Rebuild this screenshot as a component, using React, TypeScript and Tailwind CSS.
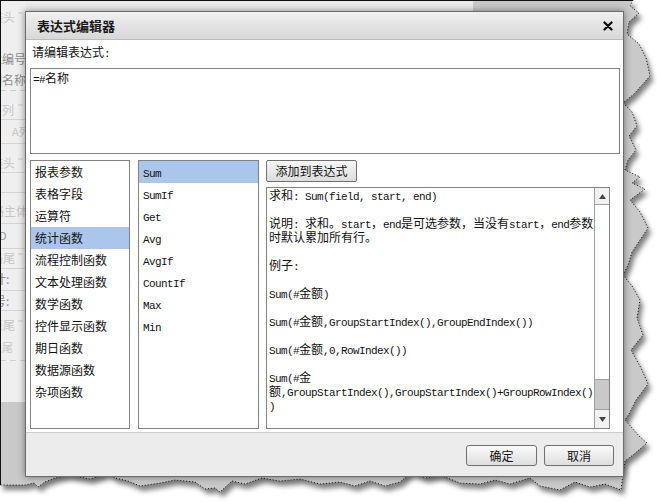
import React from "react";

function Mixed({ t }: { t: string }) {
  const parts = t.split(/([\x20-\x7e]+)/);
  return (
    <>
      {parts.map((s, i) =>
        s === "" ? null : /^[\x20-\x7e]+$/.test(s) ? (
          <span key={i} className="font-['Liberation_Mono',monospace] text-[11px] tracking-[-0.6px]">
            {s}
          </span>
        ) : (
          <span key={i} className="font-['Noto_Sans_CJK_SC',sans-serif] text-[12px]">
            {s}
          </span>
        )
      )}
    </>
  );
}

const tearPts =
  "633,0 630,6 639,13 629,22 627,34 639,44 646,58 650,76 634,94 623,103 632,112 637,126 629,136 636,150 628,160 625,170 640,177 632,183 645,189 630,200 640,212 648,228 640,240 632,252 628,265 623,275 632,286 640,300 637,318 643,335 631,350 641,368 648,384 636,400 629,414 625,420 640,437 647,443 633,455 625,461 623,475 621,490 605,484 590,487 575,482 560,490 540,486 530,478 510,484 495,480 480,484 460,483 440,475 425,478 412,472 400,482 385,486 370,481 355,486 340,482 320,484 300,479 280,481 262,478 245,484 232,481 220,492 215,488 205,489 195,482 175,480 160,483 140,486 128,481 115,478 108,473 100,476 90,479 80,477 68,475 55,478 45,482 38,487 34,483 25,485 0,485";

const leftItems = [
  "报表参数",
  "表格字段",
  "运算符",
  "统计函数",
  "流程控制函数",
  "文本处理函数",
  "数学函数",
  "控件显示函数",
  "期日函数",
  "数据源函数",
  "杂项函数",
];
const midItems = ["Sum", "SumIf", "Get", "Avg", "AvgIf", "CountIf", "Max", "Min"];

const lines = [
  "求和: Sum(field, start, end)",
  "",
  "说明: 求和。start，end是可选参数，当没有start，end参数",
  "时默认累加所有行。",
  "",
  "例子:",
  "",
  "Sum(#金额)",
  "",
  "Sum(#金额,GroupStartIndex(),GroupEndIndex())",
  "",
  "Sum(#金额,0,RowIndex())",
  "",
  "Sum(#金",
  "额,GroupStartIndex(),GroupStartIndex()+GroupRowIndex()",
  ")",
];

function Background() {
  return (
    <svg className="absolute inset-0" width={657} height={503} viewBox="0 0 657 503">
      <defs>
        <filter id="sh" x="-10%" y="-10%" width="120%" height="120%">
          <feGaussianBlur stdDeviation="2.5" />
        </filter>
        <clipPath id="strip">
          <rect x="0" y="0" width="25" height="402" />
        </clipPath>
      </defs>
      <polygon points={"0,0 " + tearPts} fill="#6a6a6a" transform="translate(3,5)" filter="url(#sh)" opacity="0.85" />
      <polygon points={"0,0 " + tearPts} fill="#c9c9c9" />
      <rect x="0" y="0" width="473" height="11" fill="#ececec" />
      <rect x="0" y="0" width="25" height="402" fill="#efefef" />
      <g clipPath="url(#strip)" fontFamily="'Noto Sans CJK SC', sans-serif" fontSize="12">
        <text x="-9" y="22" fill="#c6c6c6">装头</text>
        <line x1="18" y1="13" x2="23" y2="13" stroke="#c6c6c6" />
        <text x="-10" y="64" fill="#8e8e8e">栏编号</text>
        <text x="-10" y="85" fill="#8e8e8e">列名称</text>
        <line x1="0" y1="90.5" x2="25" y2="90.5" stroke="#cfcfcf" strokeDasharray="6 4" />
        <text x="-10" y="115" fill="#c6c6c6">序列</text>
        <line x1="18" y1="105" x2="23" y2="105" stroke="#c6c6c6" />
        <line x1="0" y1="119.5" x2="25" y2="119.5" stroke="#d4d4d4" />
        <text x="12" y="136" fill="#c6c6c6" fontSize="11">A列</text>
        <line x1="0" y1="143.5" x2="25" y2="143.5" stroke="#d4d4d4" />
        <text x="-9" y="168" fill="#c6c6c6">装头</text>
        <line x1="18" y1="159" x2="23" y2="159" stroke="#c6c6c6" />
        <line x1="0" y1="172.5" x2="25" y2="172.5" stroke="#d4d4d4" />
        <line x1="0" y1="192.5" x2="25" y2="192.5" stroke="#d4d4d4" />
        <text x="-8" y="216" fill="#c6c6c6">路主体</text>
        <line x1="0" y1="223.5" x2="25" y2="223.5" stroke="#d4d4d4" />
        <text x="-1" y="240" fill="#999999" fontSize="11">D</text>
        <line x1="0" y1="248.5" x2="25" y2="248.5" stroke="#d4d4d4" />
        <text x="-9" y="263" fill="#c6c6c6">路尾</text>
        <line x1="18" y1="254" x2="23" y2="254" stroke="#c6c6c6" />
        <line x1="0" y1="268.5" x2="25" y2="268.5" stroke="#d4d4d4" />
        <text x="-6" y="284" fill="#8e8e8e">计:</text>
        <line x1="0" y1="290.5" x2="25" y2="290.5" stroke="#d4d4d4" />
        <text x="-6" y="306" fill="#8e8e8e">号:</text>
        <line x1="0" y1="310.5" x2="25" y2="310.5" stroke="#d4d4d4" />
        <text x="-9" y="330" fill="#c6c6c6">表尾</text>
        <line x1="18" y1="321" x2="23" y2="321" stroke="#c6c6c6" />
        <text x="-9" y="352" fill="#c6c6c6" fontSize="11">表尾</text>
        <line x1="0" y1="360.5" x2="25" y2="360.5" stroke="#d0d0d0" strokeDasharray="6 4" />
      </g>
      <line x1="0" y1="0.5" x2="633" y2="0.5" stroke="#111" />
      <line x1="0.5" y1="0" x2="0.5" y2="485" stroke="#111" />
      <polyline points={tearPts} fill="none" stroke="#111" strokeWidth="1" strokeDasharray="1 2" />
    </svg>
  );
}

function ListItem({ text, selected, mono }: { text: string; selected?: boolean; mono?: boolean }) {
  return (
    <div
      className={
        selected
          ? "h-[22px] leading-[20px] pl-[4px] bg-[#abc6ec] text-[#111] whitespace-pre"
          : "h-[22px] leading-[20px] pl-[4px] text-[#111] whitespace-pre"
      }
    >
      {mono ? (
        <span className="font-['Liberation_Mono',monospace] text-[11px] tracking-[-0.6px]">{text}</span>
      ) : (
        <span className="font-['Noto_Sans_CJK_SC',sans-serif] text-[12px]">{text}</span>
      )}
    </div>
  );
}

export default function App() {
  return (
    <div className="relative w-[657px] h-[503px] overflow-hidden bg-white pt-[11px] pl-[25px]">
      <Background />
      <div className="relative w-[599px] h-[466px] border border-[#6c6c6c] bg-white flex flex-col shadow-[0_0_7px_rgba(0,0,0,0.45)] text-[#111]">
        <div className="h-[28px] border-b border-[#bcbcbc] bg-gradient-to-b from-[#f0f0f0] to-[#d8d8d8] flex items-center justify-between pl-[11px] pr-[10px]">
          <span className="font-['Noto_Sans_CJK_SC',sans-serif] text-[13px] font-bold text-[#1a1a1a]">表达式编辑器</span>
          <svg width="10" height="10" viewBox="0 0 10 10" className="mt-[1px]">
            <path d="M1.5 1.5L8.5 8.5M8.5 1.5L1.5 8.5" stroke="#111" strokeWidth="2.4" strokeLinecap="round" />
          </svg>
        </div>
        <div className="h-[392px] pl-[4px] pr-[3px] flex flex-col">
          <div className="h-[28px] pt-[4px] leading-[14px] pl-[2px] whitespace-pre">
            <Mixed t="请编辑表达式:" />
          </div>
          <div className="h-[86px] border border-[#828282] pl-[2px] pt-[1px] leading-[14px] whitespace-pre">
            <Mixed t="=#名称" />
          </div>
          <div className="mt-[6px] h-[269px] flex">
            <div className="w-[100px] h-full border border-[#828282] bg-white">
              {leftItems.map((t, i) => (
                <ListItem key={t} text={t} selected={i === 3} />
              ))}
            </div>
            <div className="ml-[8px] w-[121px] h-full border border-[#828282] bg-white">
              {midItems.map((t, i) => (
                <ListItem key={t} text={t} selected={i === 0} mono />
              ))}
            </div>
            <div className="ml-[7px] w-[344px] h-full flex flex-col">
              <div className="w-[91px] h-[22px] border border-[#707070] rounded-[2px] bg-gradient-to-b from-[#f6f6f6] to-[#dddddd] flex items-center justify-center">
                <span className="font-['Noto_Sans_CJK_SC',sans-serif] text-[12px] leading-[14px]">添加到表达式</span>
              </div>
              <div className="mt-[5px] h-[242px] border border-[#828282] flex bg-white">
                <div className="flex-1 pl-[2px] -mt-[1px]">
                  {lines.map((l, i) => (
                    <div key={i} className="h-[14px] leading-[14px] whitespace-pre">
                      <Mixed t={l} />
                    </div>
                  ))}
                </div>
                <div className="w-[15px] h-full flex flex-col border-l border-[#a0a0a0] bg-[#f7f7f7]">
                  <div className="h-[17px] border-b border-[#a0a0a0] bg-[#f2f2f2] flex items-center justify-center">
                    <svg width="7" height="5" viewBox="0 0 7 5">
                      <polygon points="3.5,0 7,5 0,5" fill="#444" />
                    </svg>
                  </div>
                  <div className="flex-1 bg-white" />
                  <div className="h-[31px] border-t border-b border-[#a0a0a0] bg-[#c9c9c9]" />
                  <div className="h-[18px] bg-[#f2f2f2] flex items-center justify-center">
                    <svg width="7" height="5" viewBox="0 0 7 5">
                      <polygon points="0,0 7,0 3.5,5" fill="#444" />
                    </svg>
                  </div>
                </div>
              </div>
            </div>
          </div>
        </div>
        <div className="flex-1 border-t border-[#cdcdcd] bg-[#ececec] flex justify-end items-start pt-[12px] pr-[9px] gap-[7px]">
          <div className="w-[71px] h-[21px] border border-[#707070] rounded-[3px] bg-gradient-to-b from-[#fbfbfb] to-[#dedede] flex items-center justify-center">
            <span className="font-['Noto_Sans_CJK_SC',sans-serif] text-[12px] leading-[14px]">确定</span>
          </div>
          <div className="w-[70px] h-[21px] border border-[#707070] rounded-[3px] bg-gradient-to-b from-[#fbfbfb] to-[#dedede] flex items-center justify-center">
            <span className="font-['Noto_Sans_CJK_SC',sans-serif] text-[12px] leading-[14px]">取消</span>
          </div>
        </div>
      </div>
    </div>
  );
}
